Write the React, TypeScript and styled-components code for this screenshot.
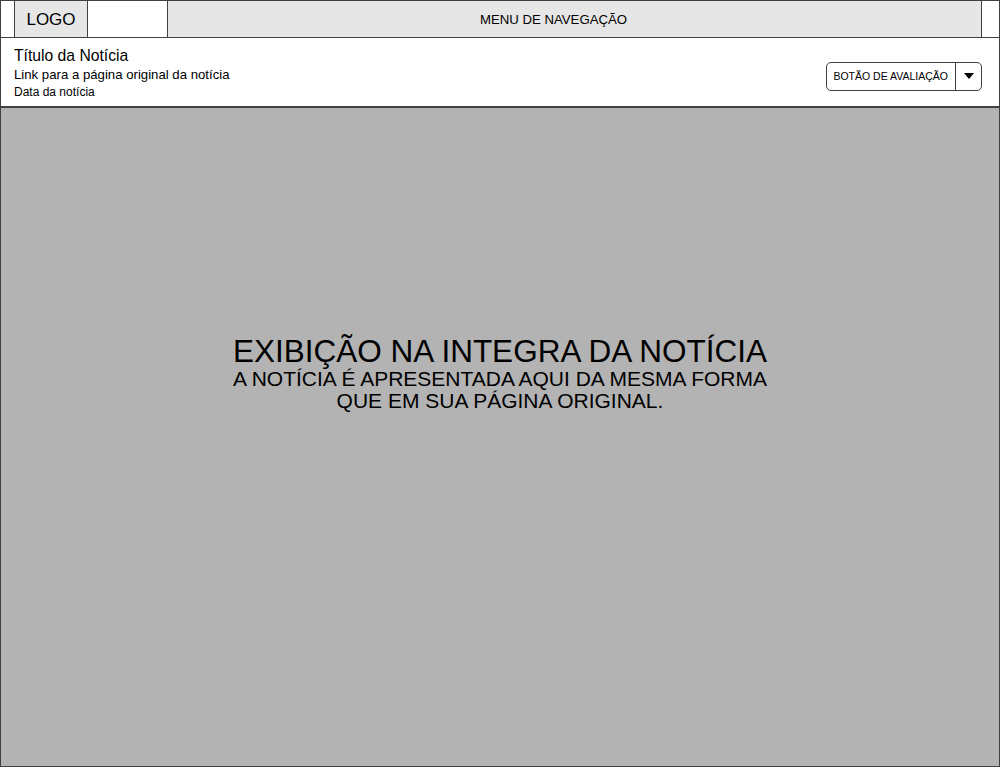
import React from "react";
import styled, { createGlobalStyle } from "styled-components";

const GlobalStyle = createGlobalStyle`
  html, body {
    margin: 0;
    padding: 0;
    background: #ffffff;
  }
  body {
    font-family: "Liberation Sans", Arial, sans-serif;
    color: #000;
  }
`;

const App = () => {
  return (
    <Page>
      <GlobalStyle />
      <TopBar>
        <LogoBox>LOGO</LogoBox>
        <Spacer />
        <NavMenu>MENU DE NAVEGAÇÃO</NavMenu>
      </TopBar>

      <InfoBar>
        <InfoText>
          <Title>Título da Notícia</Title>
          <SourceLink>Link para a página original da notícia</SourceLink>
          <NewsDate>Data da notícia</NewsDate>
        </InfoText>

        <RatingButton>
          <RatingLabel>BOTÃO DE AVALIAÇÃO</RatingLabel>
          <RatingToggle>
            <svg width="10" height="6" viewBox="0 0 10 6">
              <path d="M0 0 L10 0 L5 6 Z" fill="#000" />
            </svg>
          </RatingToggle>
        </RatingButton>
      </InfoBar>

      <Content>
        <Headline>EXIBIÇÃO NA INTEGRA DA NOTÍCIA</Headline>
        <Subline>
          A NOTÍCIA É APRESENTADA AQUI DA MESMA FORMA
          <br />
          QUE EM SUA PÁGINA ORIGINAL.
        </Subline>
      </Content>
    </Page>
  );
};

const Page = styled.div`
  box-sizing: border-box;
  width: 1000px;
  height: 767px;
  border: 1px solid #404040;
  display: flex;
  flex-direction: column;
  background: #ffffff;
`;

const TopBar = styled.div`
  display: flex;
  height: 36px;
  padding: 0 17px 0 13px;
  border-bottom: 1px solid #404040;
`;

const LogoBox = styled.div`
  box-sizing: border-box;
  width: 74px;
  display: flex;
  align-items: center;
  justify-content: center;
  background: #e6e6e6;
  border-left: 1px solid #404040;
  border-right: 1px solid #404040;
  font-size: 17px;
  padding-top: 1px;
`;

const Spacer = styled.div`
  width: 79px;
`;

const NavMenu = styled.div`
  box-sizing: border-box;
  flex: 1;
  display: flex;
  align-items: center;
  justify-content: center;
  padding-right: 42px;
  background: #e6e6e6;
  border-left: 1px solid #404040;
  border-right: 1px solid #404040;
  font-size: 13.2px;
`;

const InfoBar = styled.div`
  display: flex;
  align-items: center;
  justify-content: space-between;
  height: 68px;
  padding: 0 17px 0 13px;
  border-bottom: 2px solid #404040;
`;

const InfoText = styled.div`
  display: flex;
  flex-direction: column;
  gap: 2px;
  margin-top: 2px;
`;

const Title = styled.div`
  font-size: 15.7px;
  line-height: 18px;
`;

const SourceLink = styled.div`
  font-size: 13.2px;
  line-height: 16px;
`;

const NewsDate = styled.div`
  font-size: 12px;
  line-height: 15px;
`;

const RatingButton = styled.div`
  box-sizing: border-box;
  display: flex;
  height: 29px;
  margin-top: 8px;
  border: 1px solid #404040;
  border-radius: 5px;
  background: #ffffff;
`;

const RatingLabel = styled.div`
  display: flex;
  align-items: center;
  padding: 0 7px 0 6px;
  font-size: 10.5px;
  border-right: 1px solid #404040;
`;

const RatingToggle = styled.div`
  width: 25px;
  display: flex;
  align-items: center;
  justify-content: center;
`;

const Content = styled.div`
  flex: 1;
  display: flex;
  flex-direction: column;
  align-items: center;
  justify-content: center;
  background: #b3b3b3;
  text-align: center;
  padding-bottom: 128px;
`;

const Headline = styled.div`
  font-size: 31.5px;
  line-height: 34px;
`;

const Subline = styled.div`
  font-size: 21px;
  line-height: 22px;
`;

export default App;
